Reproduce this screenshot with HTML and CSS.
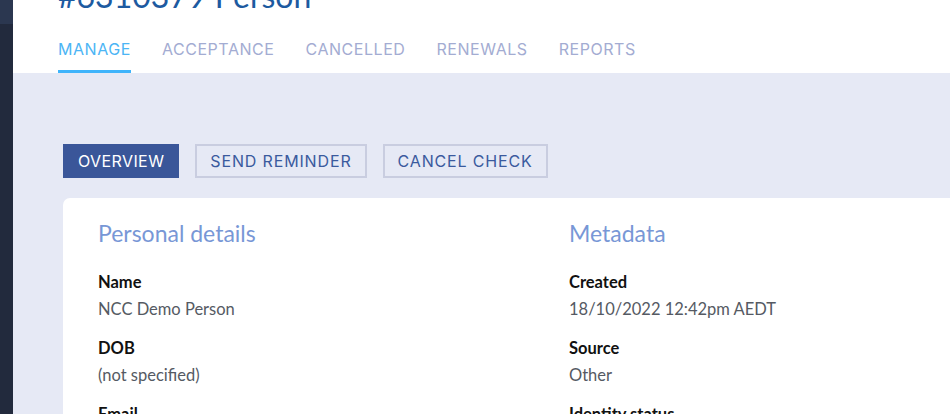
FILE: index.html
```html
<!DOCTYPE html>
<html lang="en">
<head>
<meta charset="utf-8">
<title>#6310379 Person</title>
<link rel="stylesheet" href="styles.css">
</head>
<body>
<div class="app">
  <aside class="sidebar">
    <div class="sidebar-top"></div>
  </aside>
  <main class="main">
    <header class="page-header">
      <h1 class="page-title">#6310379 Person</h1>
      <nav class="tabs">
        <a class="tab tab-active">MANAGE</a>
        <a class="tab">ACCEPTANCE</a>
        <a class="tab">CANCELLED</a>
        <a class="tab">RENEWALS</a>
        <a class="tab">REPORTS</a>
      </nav>
    </header>
    <section class="content">
      <div class="actions">
        <button class="btn btn-primary">OVERVIEW</button>
        <button class="btn">SEND REMINDER</button>
        <button class="btn">CANCEL CHECK</button>
      </div>
      <div class="card">
        <div class="col">
          <h2 class="card-heading">Personal details</h2>
          <dl class="fields">
            <dt>Name</dt><dd>NCC Demo Person</dd>
            <dt>DOB</dt><dd>(not specified)</dd>
            <dt>Email</dt><dd>demo@example.com</dd>
          </dl>
        </div>
        <div class="col">
          <h2 class="card-heading">Metadata</h2>
          <dl class="fields">
            <dt>Created</dt><dd>18/10/2022 12:42pm AEDT</dd>
            <dt>Source</dt><dd>Other</dd>
            <dt>Identity status</dt><dd>Pending</dd>
          </dl>
        </div>
      </div>
    </section>
  </main>
</div>
</body>
</html>
```

FILE: styles.css
```css
html, body {
  margin: 0;
  padding: 0;
  height: 100%;
  overflow: hidden;
}

body {
  font-family: "Lato", "Open Sans", sans-serif;
  background: #e6e9f5;
}

.app {
  display: flex;
  min-height: 100vh;
}

.sidebar {
  width: 13px;
  flex: none;
  background: #222a3d;
}

.sidebar-top {
  height: 24px;
  background: #2b3750;
}

.main {
  flex: 1;
  display: flex;
  flex-direction: column;
  min-width: 0;
}

.page-header {
  background: #ffffff;
  padding-left: 45px;
}

.page-title {
  margin: -24px 0 0 0;
  font-family: "Lato", sans-serif;
  font-weight: 400;
  font-size: 32px;
  line-height: 40px;
  color: #1d5aa0;
  white-space: nowrap;
}

.tabs {
  display: flex;
  gap: 31px;
  margin-top: 24px;
}

.tab {
  font-family: "Inter", "Noto Sans", sans-serif;
  font-size: 16px;
  letter-spacing: 0.55px;
  color: #a3acd2;
  padding-bottom: 12px;
  border-bottom: 3px solid transparent;
  line-height: 18px;
}

.tab-active {
  color: #4cb5f5;
  border-bottom-color: #3fb4fb;
}

.content {
  padding: 71px 0 0 50px;
}

.actions {
  display: flex;
  gap: 16px;
}

.btn {
  font-family: "Inter", "Noto Sans", sans-serif;
  font-size: 16px;
  letter-spacing: 0.85px;
  color: #3a5a9e;
  background: transparent;
  border: 2px solid #c9cde0;
  height: 34px;
  padding: 0 13px;
  line-height: 30px;
}

.btn-primary {
  background: #3a5699;
  border-color: #3a5699;
  color: #ffffff;
  letter-spacing: 0.4px;
}

.card {
  margin-top: 20px;
  background: #ffffff;
  border-radius: 7px 0 0 0;
  display: grid;
  grid-template-columns: 471px 471px;
  padding: 22px 0 0 35px;
  width: 1000px;
}

.card-heading {
  margin: 0;
  font-weight: 400;
  font-size: 23px;
  line-height: 26px;
  color: #7897d6;
}

.fields {
  margin: 26px 0 0 0;
}

.fields dt {
  font-weight: 700;
  font-size: 16.5px;
  line-height: 20px;
  color: #111111;
}

.fields dd {
  margin: 7px 0 19px 0;
  font-size: 16.5px;
  line-height: 20px;
  color: #555a63;
}
```
